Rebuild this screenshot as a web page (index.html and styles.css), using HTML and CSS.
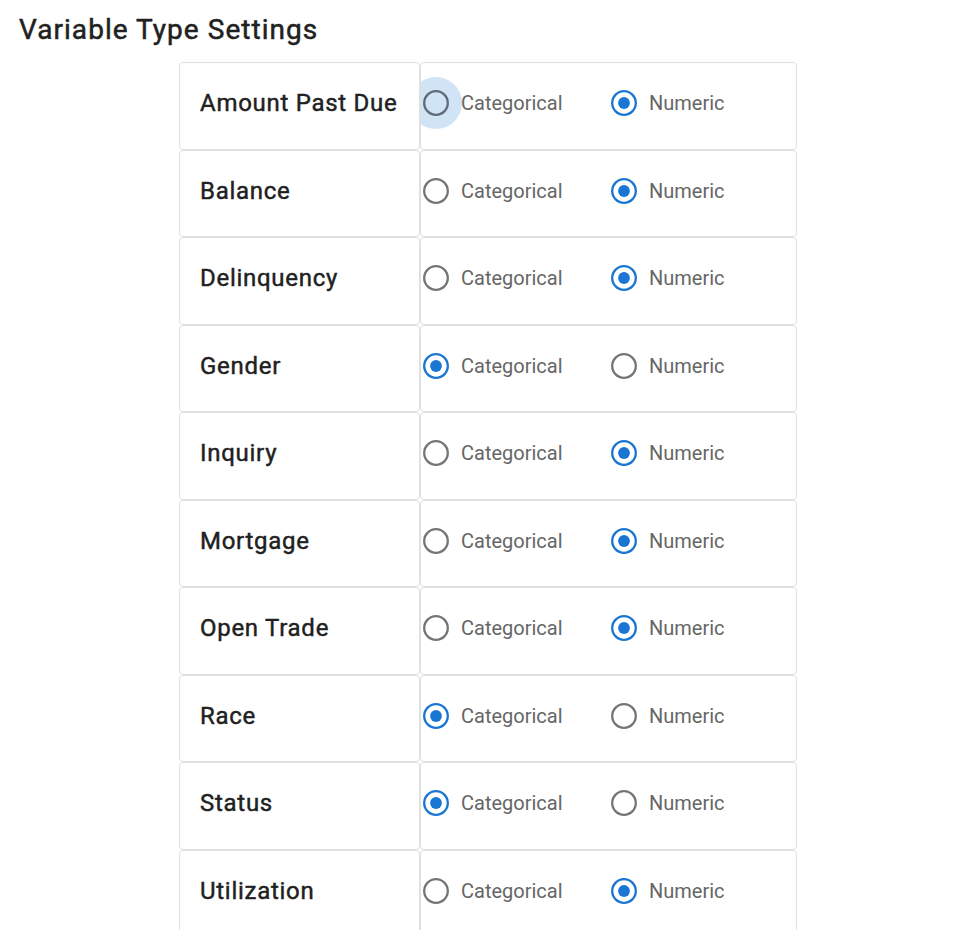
FILE: index.html
```html
<!DOCTYPE html>
<html lang="en">
<head>
<meta charset="utf-8">
<title>Variable Type Settings</title>
<link rel="stylesheet" href="styles.css">
</head>
<body>
<div class="page">
  <h1 class="title">Variable Type Settings</h1>
  <div class="settings">
    <div class="row">
      <div class="cell name">Amount Past Due</div>
      <div class="cell choice">
        <label class="option"><span class="radio focus"><svg viewBox="0 0 26 26" width="26" height="26"><circle class="ring" cx="13" cy="13" r="11.8"/></svg></span><span class="opt-text">Categorical</span></label>
        <label class="option"><span class="radio checked"><svg viewBox="0 0 26 26" width="26" height="26"><circle class="ring" cx="13" cy="13" r="11.8"/><circle class="dot" cx="13" cy="13" r="5.9"/></svg></span><span class="opt-text">Numeric</span></label>
      </div>
    </div>
    <div class="row">
      <div class="cell name">Balance</div>
      <div class="cell choice">
        <label class="option"><span class="radio"><svg viewBox="0 0 26 26" width="26" height="26"><circle class="ring" cx="13" cy="13" r="11.8"/></svg></span><span class="opt-text">Categorical</span></label>
        <label class="option"><span class="radio checked"><svg viewBox="0 0 26 26" width="26" height="26"><circle class="ring" cx="13" cy="13" r="11.8"/><circle class="dot" cx="13" cy="13" r="5.9"/></svg></span><span class="opt-text">Numeric</span></label>
      </div>
    </div>
    <div class="row">
      <div class="cell name">Delinquency</div>
      <div class="cell choice">
        <label class="option"><span class="radio"><svg viewBox="0 0 26 26" width="26" height="26"><circle class="ring" cx="13" cy="13" r="11.8"/></svg></span><span class="opt-text">Categorical</span></label>
        <label class="option"><span class="radio checked"><svg viewBox="0 0 26 26" width="26" height="26"><circle class="ring" cx="13" cy="13" r="11.8"/><circle class="dot" cx="13" cy="13" r="5.9"/></svg></span><span class="opt-text">Numeric</span></label>
      </div>
    </div>
    <div class="row">
      <div class="cell name">Gender</div>
      <div class="cell choice">
        <label class="option"><span class="radio checked"><svg viewBox="0 0 26 26" width="26" height="26"><circle class="ring" cx="13" cy="13" r="11.8"/><circle class="dot" cx="13" cy="13" r="5.9"/></svg></span><span class="opt-text">Categorical</span></label>
        <label class="option"><span class="radio"><svg viewBox="0 0 26 26" width="26" height="26"><circle class="ring" cx="13" cy="13" r="11.8"/></svg></span><span class="opt-text">Numeric</span></label>
      </div>
    </div>
    <div class="row">
      <div class="cell name">Inquiry</div>
      <div class="cell choice">
        <label class="option"><span class="radio"><svg viewBox="0 0 26 26" width="26" height="26"><circle class="ring" cx="13" cy="13" r="11.8"/></svg></span><span class="opt-text">Categorical</span></label>
        <label class="option"><span class="radio checked"><svg viewBox="0 0 26 26" width="26" height="26"><circle class="ring" cx="13" cy="13" r="11.8"/><circle class="dot" cx="13" cy="13" r="5.9"/></svg></span><span class="opt-text">Numeric</span></label>
      </div>
    </div>
    <div class="row">
      <div class="cell name">Mortgage</div>
      <div class="cell choice">
        <label class="option"><span class="radio"><svg viewBox="0 0 26 26" width="26" height="26"><circle class="ring" cx="13" cy="13" r="11.8"/></svg></span><span class="opt-text">Categorical</span></label>
        <label class="option"><span class="radio checked"><svg viewBox="0 0 26 26" width="26" height="26"><circle class="ring" cx="13" cy="13" r="11.8"/><circle class="dot" cx="13" cy="13" r="5.9"/></svg></span><span class="opt-text">Numeric</span></label>
      </div>
    </div>
    <div class="row">
      <div class="cell name">Open Trade</div>
      <div class="cell choice">
        <label class="option"><span class="radio"><svg viewBox="0 0 26 26" width="26" height="26"><circle class="ring" cx="13" cy="13" r="11.8"/></svg></span><span class="opt-text">Categorical</span></label>
        <label class="option"><span class="radio checked"><svg viewBox="0 0 26 26" width="26" height="26"><circle class="ring" cx="13" cy="13" r="11.8"/><circle class="dot" cx="13" cy="13" r="5.9"/></svg></span><span class="opt-text">Numeric</span></label>
      </div>
    </div>
    <div class="row">
      <div class="cell name">Race</div>
      <div class="cell choice">
        <label class="option"><span class="radio checked"><svg viewBox="0 0 26 26" width="26" height="26"><circle class="ring" cx="13" cy="13" r="11.8"/><circle class="dot" cx="13" cy="13" r="5.9"/></svg></span><span class="opt-text">Categorical</span></label>
        <label class="option"><span class="radio"><svg viewBox="0 0 26 26" width="26" height="26"><circle class="ring" cx="13" cy="13" r="11.8"/></svg></span><span class="opt-text">Numeric</span></label>
      </div>
    </div>
    <div class="row">
      <div class="cell name">Status</div>
      <div class="cell choice">
        <label class="option"><span class="radio checked"><svg viewBox="0 0 26 26" width="26" height="26"><circle class="ring" cx="13" cy="13" r="11.8"/><circle class="dot" cx="13" cy="13" r="5.9"/></svg></span><span class="opt-text">Categorical</span></label>
        <label class="option"><span class="radio"><svg viewBox="0 0 26 26" width="26" height="26"><circle class="ring" cx="13" cy="13" r="11.8"/></svg></span><span class="opt-text">Numeric</span></label>
      </div>
    </div>
    <div class="row">
      <div class="cell name">Utilization</div>
      <div class="cell choice">
        <label class="option"><span class="radio"><svg viewBox="0 0 26 26" width="26" height="26"><circle class="ring" cx="13" cy="13" r="11.8"/></svg></span><span class="opt-text">Categorical</span></label>
        <label class="option"><span class="radio checked"><svg viewBox="0 0 26 26" width="26" height="26"><circle class="ring" cx="13" cy="13" r="11.8"/><circle class="dot" cx="13" cy="13" r="5.9"/></svg></span><span class="opt-text">Numeric</span></label>
      </div>
    </div>
  </div>
</div>
</body>
</html>
```
FILE: styles.css
```css
* { box-sizing: border-box; }

body {
  margin: 0;
  background: #ffffff;
  font-family: Roboto, "Liberation Sans", Arial, sans-serif;
  color: rgba(0, 0, 0, 0.87);
}

.page {
  padding: 0 19px;
}

.title {
  margin: 13px 0 16px;
  font-size: 28px;
  font-weight: 400;
  letter-spacing: 0.037em;
  line-height: normal;
  color: #212121;
  -webkit-text-stroke: 0.5px #212121;
}

.settings {
  width: 618px;
  margin-left: 160px;
  display: flex;
  flex-direction: column;
}

.row {
  display: grid;
  grid-template-columns: 241px 377px;
  height: 87.5px;
}

.cell {
  border: 1px solid #e0e0e0;
  border-radius: 4px;
  display: flex;
  align-items: center;
  padding-bottom: 5px;
}

.name {
  padding-left: 20px;
  font-size: 24px;
  font-weight: 400;
  letter-spacing: 0.03em;
  color: #212121;
  -webkit-text-stroke: 0.45px #212121;
}

.choice {
  overflow: hidden;
  padding-left: 0;
}

.option {
  display: flex;
  align-items: center;
  width: 188px;
  flex: none;
}

.option:first-child {
  margin-left: -10px;
}

.radio {
  width: 50px;
  height: 50px;
  border-radius: 50%;
  display: flex;
  align-items: center;
  justify-content: center;
  flex: none;
}

.radio.focus {
  width: 52px;
  height: 52px;
  margin: 0 -1px;
  background: rgba(25, 118, 210, 0.2);
}

.ring {
  fill: none;
  stroke: #757575;
  stroke-width: 2.3;
}

.radio.focus .ring {
  stroke: #5f6a76;
}

.checked .ring {
  stroke: #1976d2;
}

.dot {
  fill: #1976d2;
}

.opt-text {
  font-size: 20px;
  color: #666666;
}
```
